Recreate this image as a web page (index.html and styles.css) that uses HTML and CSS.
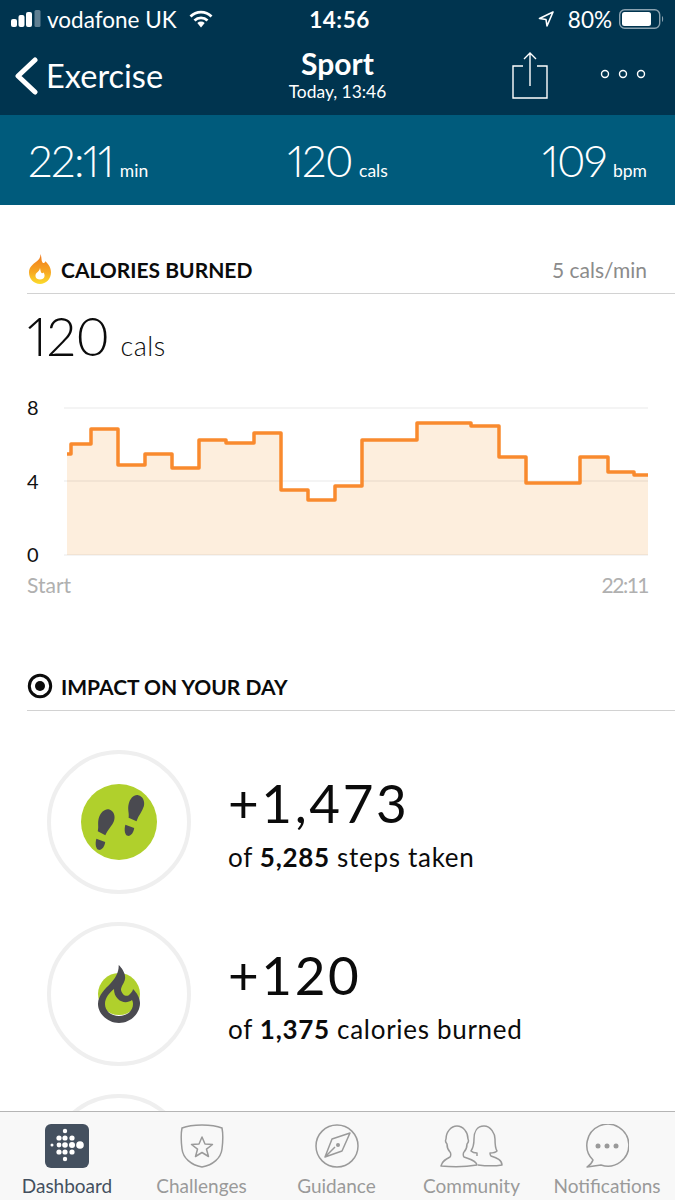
FILE: index.html
```html
<!DOCTYPE html>
<html lang="en">
<head>
    <meta charset="UTF-8">
    <meta name="viewport" content="width=device-width, initial-scale=1.0">
    <title>Sport</title>
    <link rel="stylesheet" href="styles.css">
</head>
<body>
<div class="page">
    <header class="top">
        <div class="status">
            <div class="status-left">
                <svg width="30" height="18" viewBox="0 0 30 18">
                    <rect x="0" y="9" width="6" height="8" rx="2" fill="#fff"/>
                    <rect x="7.500" y="5" width="6" height="12" rx="2" fill="#fff"/>
                    <rect x="15" y="2" width="6" height="15" rx="2" fill="#fff"/>
                    <rect x="23.500" y="0" width="6" height="17" rx="1.500" fill="#5f7f92"/>
                </svg>
                <span>vodafone UK</span>
                <svg width="24" height="18" viewBox="0 0 24 18">
                    <path d="M1.500 6.500a15 15 0 0 1 21 0" fill="none" stroke="#fff" stroke-width="2.800"/>
                    <path d="M5.500 10.500a9.500 9.500 0 0 1 13 0" fill="none" stroke="#fff" stroke-width="2.800"/>
                    <path d="M8.300 13a5.500 5.500 0 0 1 7.400 0L12 17.500z" fill="#fff"/>
                </svg>
            </div>
            <div class="status-time">14:56</div>
            <div class="status-right">
                <svg width="16" height="16" viewBox="0 0 16 16">
                    <path d="M15 1 1.500 7.500 8 8.500l1 6.500z" fill="none" stroke="#fff" stroke-width="1.600" stroke-linejoin="round"/>
                </svg>
                <span class="pct">80%</span>
                <svg width="45" height="20" viewBox="0 0 45 20">
                    <rect x="0.700" y="0.700" width="40" height="18.600" rx="5" fill="none" stroke="#8ba2b0" stroke-width="1.400"/>
                    <rect x="3" y="3" width="29" height="14" rx="2.500" fill="#fff"/>
                    <path d="M43 7c1.500.5 1.500 5.500 0 6z" fill="#8ba2b0"/>
                </svg>
            </div>
        </div>
        <nav class="nav">
            <div class="back">
                <svg width="26" height="38" viewBox="0 0 26 38">
                    <path d="M22 3 5 19l17 16" fill="none" stroke="#fff" stroke-width="5" stroke-linecap="round" stroke-linejoin="round"/>
                </svg>
                <span>Exercise</span>
            </div>
            <div class="title">
                <div class="title-main">Sport</div>
                <div class="title-sub">Today, 13:46</div>
            </div>
            <div class="actions">
                <svg width="36" height="48" viewBox="0 0 36 48">
                    <path d="M11 15H1v32h34V15H25M18 35V2M12 8l6-6 6 6" fill="none" stroke="#fff" stroke-width="1.400"/>
                </svg>
                <svg class="dots" width="46" height="12" viewBox="0 0 46 12">
                    <circle cx="5" cy="6" r="3.500" fill="none" stroke="#fff" stroke-width="1.400"/>
                    <circle cx="23" cy="6" r="3.500" fill="none" stroke="#fff" stroke-width="1.400"/>
                    <circle cx="41" cy="6" r="3.500" fill="none" stroke="#fff" stroke-width="1.400"/>
                </svg>
            </div>
        </nav>
    </header>

    <div class="stats">
        <div class="stat"><span class="stat-num">22:11</span><span class="stat-unit">min</span></div>
        <div class="stat"><span class="stat-num">120</span><span class="stat-unit">cals</span></div>
        <div class="stat"><span class="stat-num">109</span><span class="stat-unit">bpm</span></div>
    </div>

    <main class="content">
        <section class="calories">
            <div class="section-head">
                <svg width="26" height="32" viewBox="0 0 26 32">
                    <defs>
                        <linearGradient id="flame" x1="0" y1="0" x2="0" y2="1">
                            <stop offset="0" stop-color="#f0791e"/>
                            <stop offset="0.6" stop-color="#f7a823"/>
                            <stop offset="1" stop-color="#fbdc2c"/>
                        </linearGradient>
                    </defs>
                    <path fill-rule="evenodd" fill="url(#flame)" d="M13.500 1c1.500 4 .5 6.500 2 8.500 1 1.200 2.500 .5 2.700-1.200C21.500 11 24 14.500 24 19.500 24 26 19 31 13 31S2 26 2 19.500C2 14 6 11 9.500 8.500 11.500 7 13.500 5 13.500 1zM13 15c-.5 3-2 3.500-3.500 5-1.800 1.800-1.500 6.500 3.500 6.500s5.500-4.500 3.500-7c-.8 1-1.800 1-2.300 0-.5-1-.7-2.500-1.200-4.500z"/>
                </svg>
                <h2>CALORIES BURNED</h2>
                <span class="head-note">5 cals/min</span>
            </div>
            <div class="big-total"><span class="big-num">120</span><span class="big-unit">cals</span></div>
            <svg class="chart" width="648" height="170" viewBox="0 395 648 170">
                <path d="M67 454H71V444H91V429H118V465H145V454H172V468H199V440H226V443H254V433H281V490H308V500H335V486H362V440H417V423H471V426H499V457H526V483H580V457H608V472H634V475H648V555H67Z" fill="#fdeedd"/>
                <path d="M64 408H648M64 481H648M64 555H648" fill="none" stroke="#000" stroke-opacity="0.09" stroke-width="1"/>
                <path d="M67 454H71V444H91V429H118V465H145V454H172V468H199V440H226V443H254V433H281V490H308V500H335V486H362V440H417V423H471V426H499V457H526V483H580V457H608V472H634V475H648" fill="none" stroke="#f98a2e" stroke-width="3.500" stroke-linejoin="round"/>
                <text class="axis" x="27" y="415">8</text>
                <text class="axis" x="27" y="489">4</text>
                <text class="axis" x="27" y="562">0</text>
            </svg>
            <div class="chart-times"><span>Start</span><span class="end-time">22:11</span></div>
        </section>

        <section class="impact">
            <div class="section-head">
                <svg width="26" height="26" viewBox="0 0 26 26">
                    <circle cx="13" cy="13" r="10.700" fill="none" stroke="#0b0b0b" stroke-width="3"/>
                    <circle cx="13" cy="13" r="5" fill="#0b0b0b"/>
                </svg>
                <h2>IMPACT ON YOUR DAY</h2>
            </div>
            <div class="impact-list">
                <div class="impact-row">
                    <div class="ring">
                        <svg width="76" height="76" viewBox="0 0 76 76">
                            <circle cx="38" cy="38" r="38" fill="#b0d02c"/>
                            <g fill="#4a4a50">
                                <path transform="translate(25 38) rotate(15) scale(.93 1)" d="M0-13C5-13 8.500-8 8-3 7.500 2 4 7 3 13L-6 11C-6 6-9 3-8.500-3-8-8-5-13 0-13Z"/>
                                <path transform="translate(19 60) rotate(12) scale(.93 1)" d="M-5-4.500 5-3C5.500 2 3 6 0 6S-5.500 1-5-4.500Z"/>
                                <path transform="translate(55 24) rotate(10) scale(.93 1)" d="M0-13C5-13 8.500-8 8-3 7.500 2 4 7 3 13L-6 11C-6 6-9 3-8.500-3-8-8-5-13 0-13Z"/>
                                <path transform="translate(48 46) rotate(12) scale(.93 1)" d="M-5-4.500 5-3C5.500 2 3 6 0 6S-5.500 1-5-4.500Z"/>
                            </g>
                        </svg>
                    </div>
                    <div class="impact-text">
                        <div class="impact-num">+1,473</div>
                        <div class="impact-label">of <b>5,285</b> steps taken</div>
                    </div>
                </div>
                <div class="impact-row">
                    <div class="ring">
                        <svg width="44" height="60" viewBox="0 0 44 60">
                            <circle cx="22" cy="30" r="21" fill="#b0d02c"/>
                            <path fill="#4a4a50" fill-rule="evenodd" d="M21.700 1C25 4 29 10 28 15 27.500 19 24 22 24 26 25 31 30 34 33 30 35 28 36 26 36 25 40 29 43 34 43 39 43 50 33 59 22 59 11 59 1 50 1 40 1 31 9 24 13 20 18 15 22 9 21.700 1ZM17 25C12 29 8 34 8 40 8 47 14 52 22 52 30 52 36 47 36 40 36 38 35.500 37 35 36 31 39 25 39 21 35 18 32 17 29 17 25Z"/>
                        </svg>
                    </div>
                    <div class="impact-text">
                        <div class="impact-num">+120</div>
                        <div class="impact-label">of <b>1,375</b> calories burned</div>
                    </div>
                </div>
                <div class="impact-row">
                    <div class="ring"></div>
                </div>
            </div>
        </section>
    </main>

    <footer class="tabs">
        <div class="tab tab-active">
            <svg width="44" height="44" viewBox="0 0 44 44">
                <rect width="44" height="44" rx="6" fill="#44505f"/>
                <g fill="#fff">
                    <circle cx="20" cy="7" r="2.200"/>
                    <circle cx="14" cy="14" r="2.600"/><circle cx="20" cy="14" r="2.600"/><circle cx="27" cy="14" r="2.600"/>
                    <circle cx="7" cy="21" r="1.500"/><circle cx="14" cy="21" r="2.400"/><circle cx="20" cy="21" r="2.800"/><circle cx="27" cy="21" r="3"/><circle cx="35" cy="21" r="3.800"/>
                    <circle cx="14" cy="28" r="2.600"/><circle cx="20" cy="28" r="2.600"/><circle cx="27" cy="28" r="2.600"/>
                    <circle cx="20" cy="35" r="2.200"/>
                </g>
            </svg>
            <span>Dashboard</span>
        </div>
        <div class="tab">
            <svg width="44" height="44" viewBox="0 0 44 44">
                <path d="M22 1c8 0 15 1 20 3 1 5 1 13 0 21-1 9-9 16-20 18C11 41 3 34 2 25 1 17 1 9 2 4c5-2 12-3 20-3z" fill="none" stroke="#9a9a9a" stroke-width="1.500"/>
                <path d="m22 13 3 7 7.500.5-6 4.700 2 7.300-6.500-4-6.500 4 2-7.300-6-4.700 7.500-.5z" fill="none" stroke="#9a9a9a" stroke-width="1.500" stroke-linejoin="round"/>
            </svg>
            <span>Challenges</span>
        </div>
        <div class="tab">
            <svg width="44" height="44" viewBox="0 0 44 44">
                <circle cx="22" cy="22" r="21" fill="none" stroke="#9a9a9a" stroke-width="1.500"/>
                <path d="M35 9 27 27 10 33l7-18zM10 33l10-10" fill="none" stroke="#9a9a9a" stroke-width="1.500" stroke-linejoin="round"/>
                <circle cx="23" cy="21" r="2" fill="#9a9a9a"/>
            </svg>
            <span>Guidance</span>
        </div>
        <div class="tab">
            <svg width="64" height="44" viewBox="0 0 64 44">
                <path d="M37 41c-1-5-8-6-13-8-1-1-1-4 0-5 2-2 3-5 3-8 1-1 2-3 1-5 0-7-5-13-11-13S6 8 6 15c-1 2 0 4 1 5 0 3 1 6 3 8 1 1 1 4 0 5-4 2-8 4-9 9 10 1 25 1 36-1z" fill="none" stroke="#9a9a9a" stroke-width="1.500" stroke-linejoin="round"/>
                <path d="M38 41c8 1 18 1 24 0 0-5-5-7-11-9-1-1-1-2-1-3 3 0 6-1 7-2-2-3-2-7-2-12S51 2 44 2s-10 6-10 13-1 9-3 12c1 1 4 2 6 2v3" fill="none" stroke="#9a9a9a" stroke-width="1.500" stroke-linejoin="round"/>
            </svg>
            <span>Community</span>
        </div>
        <div class="tab">
            <svg width="44" height="44" viewBox="0 0 44 44">
                <path d="M8 36A21 21 0 1 1 16 41L2 43c3-2 5-4 6-7z" fill="none" stroke="#9a9a9a" stroke-width="1.500" stroke-linejoin="round"/>
                <circle cx="13" cy="22" r="2.500" fill="#9a9a9a"/>
                <circle cx="22" cy="22" r="2.500" fill="#9a9a9a"/>
                <circle cx="31" cy="22" r="2.500" fill="#9a9a9a"/>
            </svg>
            <span>Notifications</span>
        </div>
    </footer>
</div>
</body>
</html>
```

FILE: styles.css
```css
* {
    box-sizing: border-box;
}
html, body {
    margin: 0;
    padding: 0;
}
body {
    font-family: Lato, "Open Sans", sans-serif;
    background-color: #fff;
    color: #0b0b0b;
}
svg {
    display: block;
    flex-shrink: 0;
}
.page {
    width: 675px;
    height: 1200px;
    display: flex;
    flex-direction: column;
    overflow: hidden;
}

/* top bar */
.top {
    height: 115px;
    background-color: #00344f;
    color: #fff;
}
.status {
    height: 38px;
    padding: 0 11px;
    display: grid;
    grid-template-columns: 1fr auto 1fr;
    align-items: center;
    font-size: 22.5px;
}
.status-left, .status-right {
    display: flex;
    align-items: center;
}
.status-left span {
    margin-left: 6px;
    margin-right: 12px;
}
.status-right {
    justify-content: flex-end;
}
.pct {
    margin-left: 14px;
    margin-right: 7px;
}
.status-time {
    font-weight: 700;
    letter-spacing: 0.5px;
    padding-left: 4px;
}
.nav {
    height: 77px;
    padding: 0 13px;
    display: grid;
    grid-template-columns: 1fr auto 1fr;
    align-items: start;
}
.back {
    display: flex;
    align-items: center;
    gap: 7px;
    padding-top: 18px;
    font-size: 32.5px;
}
.title {
    text-align: center;
    padding-top: 7px;
}
.title-main {
    font-size: 30px;
    line-height: 36px;
    font-weight: 700;
}
.title-sub {
    font-size: 17.4px;
    line-height: 22px;
}
.actions {
    display: flex;
    justify-content: flex-end;
    gap: 52px;
    padding-top: 13px;
    padding-right: 16px;
}
.dots {
    margin-top: 17px;
}

/* summary strip */
.stats {
    height: 90px;
    padding: 0 28px;
    background-color: #005b7c;
    color: #fff;
    display: grid;
    grid-template-columns: 1fr auto 1fr;
    align-items: baseline;
}
.stat {
    line-height: 90px;
}
.stat:last-child {
    justify-self: end;
}
.stat-num {
    font-size: 44px;
    font-weight: 300;
    letter-spacing: -1.6px;
    font-variant-numeric: proportional-nums;
}
.stat-unit {
    font-size: 17.5px;
    margin-left: 7px;
}

/* body */
.content {
    flex: 1;
    min-height: 0;
    overflow: hidden;
}
.section-head {
    height: 47px;
    margin-left: 27px;
    padding-right: 28px;
    padding-bottom: 2px;
    display: flex;
    align-items: center;
    gap: 8px;
    border-bottom: 1px solid #d2d2d2;
}
.section-head h2 {
    margin: 0;
    font-size: 21px;
    font-weight: 700;
    flex: 1;
}
.head-note {
    font-size: 21px;
    color: #8b8b8b;
}
.calories {
    padding-top: 42px;
}
.big-total {
    margin-left: 27px;
    padding-top: 9px;
    display: flex;
    align-items: baseline;
}
.big-num {
    font-size: 53px;
    font-weight: 300;
    line-height: 66px;
    letter-spacing: -0.5px;
    font-variant-numeric: proportional-nums;
}
.big-unit {
    margin-left: 11px;
    font-size: 27px;
    font-weight: 300;
    letter-spacing: 0.5px;
}
.chart {
    margin-top: 26px;
}
.axis {
    font-family: Lato, sans-serif;
    font-size: 20px;
    fill: #111;
}
.chart-times {
    margin-top: 7px;
    padding: 0 27px;
    display: flex;
    justify-content: space-between;
    font-size: 21px;
    color: #b0b0b0;
}
.end-time {
    letter-spacing: -1.5px;
}
.impact {
    padding-top: 67px;
}
.impact-list {
    padding-top: 25px;
}
.impact-row {
    height: 172px;
    padding-left: 47px;
    display: flex;
    align-items: center;
    gap: 37px;
}
.ring {
    width: 144px;
    height: 144px;
    flex-shrink: 0;
    border: 4px solid #efefef;
    border-radius: 50%;
    display: flex;
    align-items: center;
    justify-content: center;
}
.impact-text {
    padding-top: 3px;
}
.impact-num {
    font-size: 53px;
    line-height: 62px;
    letter-spacing: 2.6px;
}
.impact-label {
    font-size: 26px;
    letter-spacing: 0.7px;
    line-height: 38px;
    margin-top: 4px;
}

/* bottom tabs */
.tabs {
    height: 89px;
    padding: 12px 0 0;
    background-color: #f8f8f8;
    border-top: 1px solid #b5b5b5;
    display: grid;
    grid-template-columns: 134px 135px 135px 135px 136px;
}
.tab {
    display: flex;
    flex-direction: column;
    align-items: center;
    gap: 6px;
    font-size: 19px;
    color: #9a9a9a;
}
.tab-active {
    color: #44505f;
}
```
